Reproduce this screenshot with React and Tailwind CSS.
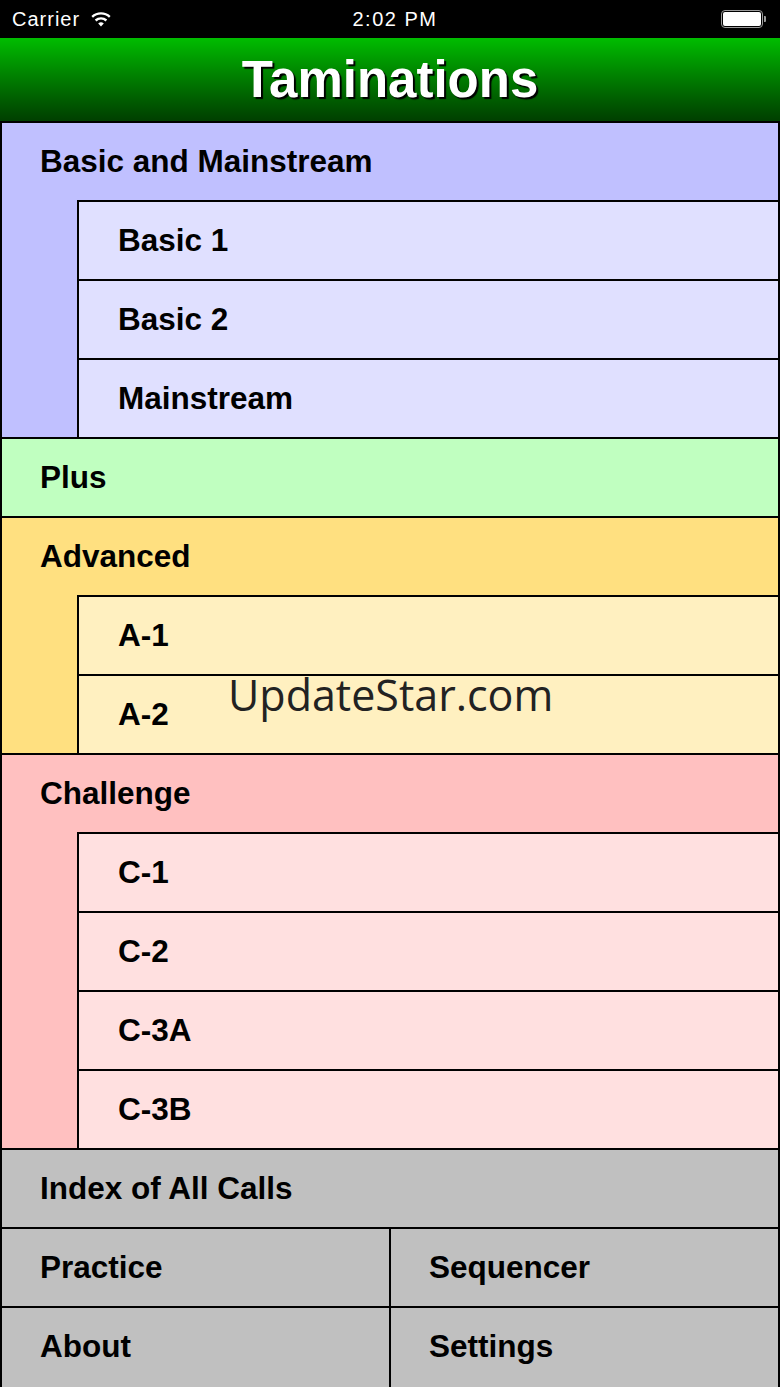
import React from 'react';

const font = { fontFamily: '"Liberation Sans", Arial, sans-serif' };

function Row({ label, bg, indent }) {
  return (
    <div className={`h-[77px] flex items-center ${bg} ${indent ? 'pl-[39px]' : 'pl-[38px]'}`}>
      <span className="text-[31.5px] font-bold text-black leading-none">{label}</span>
    </div>
  );
}

function Group({ title, bg, subBg, items }) {
  return (
    <div className={`flex flex-col ${bg}`}>
      <Row label={title} bg={bg} />
      <div className="ml-[75px] bg-black pt-[2px] pl-[2px] flex flex-col gap-[2px]">
        {items.map((it) => (
          <Row key={it} label={it} bg={subBg} indent />
        ))}
      </div>
    </div>
  );
}

function StatusBar() {
  return (
    <div className="h-[38px] bg-black flex items-center justify-between px-[12px] text-white relative">
      <div className="flex items-center gap-[10px]">
        <span className="text-[20px] tracking-[1px] leading-none">Carrier</span>
        <svg width="22" height="16" viewBox="0 0 22 16" fill="white">
          <path d="M11 15.5 8.2 12.4a4.2 4.2 0 0 1 5.6 0Z" />
          <path d="M6.4 10.4a6.8 6.8 0 0 1 9.2 0l1.6-1.8a9.2 9.2 0 0 0-12.4 0Z" />
          <path d="M3 6.7a11.8 11.8 0 0 1 16 0l1.6-1.8a14.2 14.2 0 0 0-19.2 0Z" />
        </svg>
      </div>
      <span className="absolute left-0 right-0 pl-[10px] text-center text-[20px] tracking-[1.5px] leading-none pointer-events-none">
        2:02 PM
      </span>
      <div className="flex items-center mr-[2px]">
        <div className="w-[42px] h-[18px] rounded-[4px] border border-[#9a9a9a] bg-black p-[1px]">
          <div className="w-full h-full rounded-[2px] bg-white" />
        </div>
        <div className="w-[2px] h-[6px] bg-[#9a9a9a] rounded-r-[1px] ml-[1px]" />
      </div>
    </div>
  );
}

export default function App() {
  return (
    <div className="w-[780px] h-[1387px] overflow-hidden bg-black relative" style={font}>
      <StatusBar />
      <div className="h-[83px] bg-gradient-to-b from-[#00bd00] to-[#003f00] flex items-center justify-center">
        <span className="text-[51px] font-bold text-white leading-none [text-shadow:2px_2px_1px_#000]">
          Taminations
        </span>
      </div>
      <div className="flex flex-col gap-[2px] pt-[2px] px-[2px]">
        <Group
          title="Basic and Mainstream"
          bg="bg-[#c0c0ff]"
          subBg="bg-[#e0e0ff]"
          items={['Basic 1', 'Basic 2', 'Mainstream']}
        />
        <Row label="Plus" bg="bg-[#c0ffc0]" />
        <Group
          title="Advanced"
          bg="bg-[#ffe080]"
          subBg="bg-[#fff0c0]"
          items={['A-1', 'A-2']}
        />
        <Group
          title="Challenge"
          bg="bg-[#ffc0c0]"
          subBg="bg-[#ffe0e0]"
          items={['C-1', 'C-2', 'C-3A', 'C-3B']}
        />
        <Row label="Index of All Calls" bg="bg-[#c0c0c0]" />
        <div className="flex gap-[2px]">
          <div className="flex-1"><Row label="Practice" bg="bg-[#c0c0c0]" /></div>
          <div className="flex-1"><Row label="Sequencer" bg="bg-[#c0c0c0]" /></div>
        </div>
        <div className="flex gap-[2px] h-[90px]">
          <div className="flex-1 bg-[#c0c0c0] pl-[38px] pt-[23px]">
            <span className="text-[31.5px] font-bold text-black leading-none">About</span>
          </div>
          <div className="flex-1 bg-[#c0c0c0] pl-[38px] pt-[23px]">
            <span className="text-[31.5px] font-bold text-black leading-none">Settings</span>
          </div>
        </div>
      </div>
      <div
        className="absolute left-[228px] top-[673px] text-[43px] text-[#222] leading-none pointer-events-none"
        style={{ fontFamily: '"Open Sans", "Noto Sans", sans-serif' }}
      >
        UpdateStar.com
      </div>
    </div>
  );
}
